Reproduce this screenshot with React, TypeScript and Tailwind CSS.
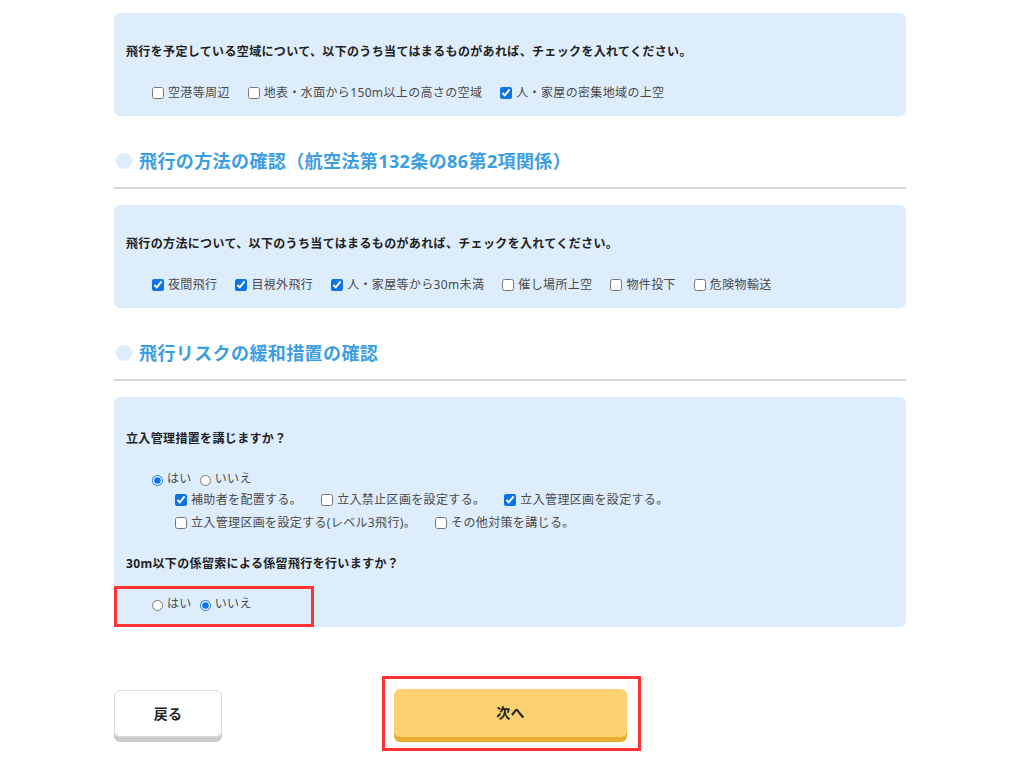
import type { ReactNode } from "react";

const font = { fontFamily: '"Noto Sans", "Noto Sans CJK JP", sans-serif' };

function Check({ label, checked }: { label: string; checked?: boolean }) {
  return (
    <label className="flex items-center gap-[4px]">
      <input type="checkbox" defaultChecked={checked} className="m-0 h-[12px] w-[12px] accent-[#0b74e5]" />
      <span>{label}</span>
    </label>
  );
}

function Radio({ name, label, checked }: { name: string; label: string; checked?: boolean }) {
  return (
    <label className="flex items-center gap-[4px]">
      <input type="radio" name={name} defaultChecked={checked} className="m-0 mt-[3px] h-[11px] w-[11px] accent-[#0b74e5]" />
      <span>{label}</span>
    </label>
  );
}

function Panel({ children, className = "" }: { children: ReactNode; className?: string }) {
  return <div className={`rounded-[6px] bg-[#deedfc] px-3 ${className}`}>{children}</div>;
}

function Heading({ title }: { title: string }) {
  return (
    <div className="border-b-2 border-[#d5d5d5] pb-[15px] pt-[34px]">
      <div className="flex h-[22px] items-center gap-[7px]">
        <span className="ml-[2px] h-4 w-4 rounded-full bg-[#ddedfc]" />
        <h2 className="text-[18px] font-bold leading-[22px] tracking-[0.4px] text-[#3b9ee3]">{title}</h2>
      </div>
    </div>
  );
}

export default function App() {
  return (
    <div
      className="min-h-[768px] bg-white pb-[16px] pl-[114px] text-[12px] leading-[18px] tracking-[0.35px]"
      style={font}
    >
      <div className="w-[792px] pt-[13px]">
        <Panel className="pb-[14px] pt-[30px]">
          <p className="font-bold text-[#222]">
            飛行を予定している空域について、以下のうち当てはまるものがあれば、チェックを入れてください。
          </p>
          <div className="mt-[23px] flex gap-[18px] pl-[26px] text-[#4a4a4a]">
            <Check label="空港等周辺" />
            <Check label="地表・水面から150m以上の高さの空域" />
            <Check label="人・家屋の密集地域の上空" checked />
          </div>
        </Panel>

        <Heading title="飛行の方法の確認（航空法第132条の86第2項関係）" />

        <Panel className="mt-[16px] pb-[14px] pt-[30px]">
          <p className="font-bold text-[#222]">
            飛行の方法について、以下のうち当てはまるものがあれば、チェックを入れてください。
          </p>
          <div className="mt-[23px] flex gap-[18px] pl-[26px] text-[#4a4a4a]">
            <Check label="夜間飛行" checked />
            <Check label="目視外飛行" checked />
            <Check label="人・家屋等から30m未満" checked />
            <Check label="催し場所上空" />
            <Check label="物件投下" />
            <Check label="危険物輸送" />
          </div>
        </Panel>

        <Heading title="飛行リスクの緩和措置の確認" />

        <Panel className="mt-[16px] pt-[33px]">
          <p className="font-bold text-[#222]">立入管理措置を講じますか？</p>
          <div className="mt-[22px] pl-[26px] text-[#4a4a4a]">
            <div className="flex gap-[8px]">
              <Radio name="q1" label="はい" checked />
              <Radio name="q1" label="いいえ" />
            </div>
            <div className="mt-[3px] flex gap-[19px] pl-[23px]">
              <Check label="補助者を配置する。" checked />
              <Check label="立入禁止区画を設定する。" />
              <Check label="立入管理区画を設定する。" checked />
            </div>
            <div className="mt-[5px] flex gap-[19px] pl-[23px]">
              <Check label="立入管理区画を設定する(レベル3飛行)。" />
              <Check label="その他対策を講じる。" />
            </div>
          </div>
          <p className="mt-[23px] font-bold text-[#222]">30m以下の係留索による係留飛行を行いますか？</p>
          <div className="relative -mx-3 -mb-[2px] mt-[13px] flex h-[41px] w-[200px] items-center gap-[8px] border-[3px] border-[#ff3333] pb-[6px] pl-[35px] text-[#4a4a4a]">
            <Radio name="q2" label="はい" />
            <Radio name="q2" label="いいえ" checked />
          </div>
        </Panel>

        <div className="mt-[51px] flex items-start">
          <button className="mt-[14px] h-[47px] w-[108px] rounded-[6px] border border-[#dcdcdc] bg-white text-[14px] font-bold text-[#222] shadow-[0_5px_0_#cccccc]">
            戻る
          </button>
          <div className="ml-[160px] border-[3px] border-[#ff3333] pb-[11px] pl-[9px] pr-[11px] pt-[10px]">
            <button className="h-[48px] w-[233px] rounded-[6px] bg-[#fdd172] text-[14px] font-bold text-[#222] shadow-[0_5px_0_#e8ad31]">
              次へ
            </button>
          </div>
        </div>
      </div>
    </div>
  );
}
